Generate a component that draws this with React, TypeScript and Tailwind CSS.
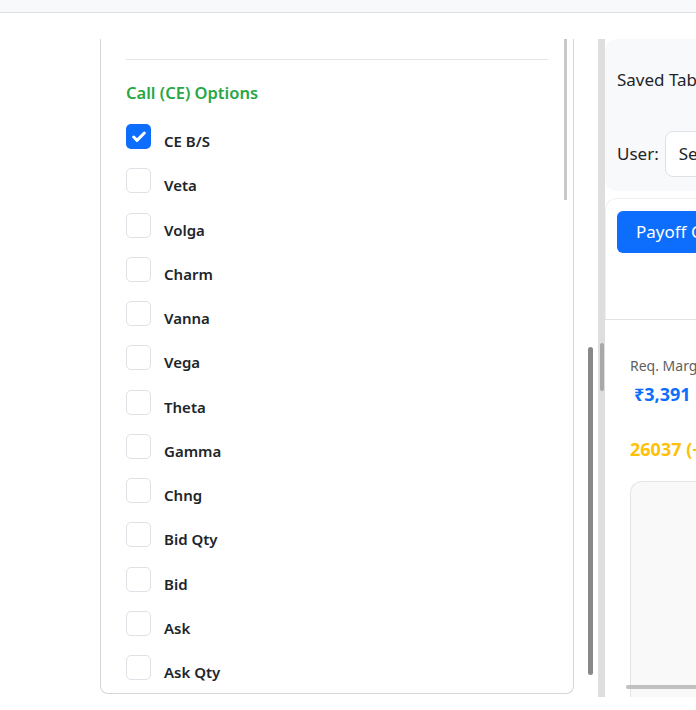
import { Check } from "lucide-react";

const columns = [
  { label: "CE B/S", checked: true },
  { label: "Veta" },
  { label: "Volga" },
  { label: "Charm" },
  { label: "Vanna" },
  { label: "Vega" },
  { label: "Theta" },
  { label: "Gamma" },
  { label: "Chng" },
  { label: "Bid Qty" },
  { label: "Bid" },
  { label: "Ask" },
  { label: "Ask Qty" },
];

function ColumnToggle({ label, checked }: { label: string; checked?: boolean }) {
  return (
    <label className="flex items-start h-[25px]">
      {checked ? (
        <span className="w-[25px] h-[25px] rounded-[5px] bg-[#0d6efd] flex items-center justify-center">
          <Check className="w-[16px] h-[16px] text-white" strokeWidth={4.5} />
        </span>
      ) : (
        <span className="w-[25px] h-[25px] rounded-[5px] border border-[#dee2e6] bg-white" />
      )}
      <span className="ml-[13px] mt-[7px] text-[15px] leading-[20px] font-semibold text-[#212529]">
        {label}
      </span>
    </label>
  );
}

export default function App() {
  return (
    <div
      className="w-[696px] h-[710px] overflow-hidden bg-white flex flex-col"
      style={{ fontFamily: '"Noto Sans", "Open Sans", sans-serif' }}
    >
      {/* Top bar */}
      <div className="h-[13px] bg-[#f8f9fa] border-b border-[#dee2e6] shrink-0" />

      <div className="flex pt-[26px] h-[684px]">
        <div className="w-[100px] shrink-0" />

        {/* Column settings panel (scrolled) */}
        <div className="w-[474px] shrink-0 h-[655px] relative border-x border-b border-[#d6d6d6] rounded-b-lg px-[25px] pt-[20px]">
          <div className="absolute right-[6px] top-0 w-[3px] h-[161px] bg-[#c8c8c8]" />
          <div className="border-t border-[#e5e5e5]" />
          <h6 className="mt-[21px] text-[16.5px] leading-[24px] font-semibold text-[#28a745]">
            Call (CE) Options
          </h6>
          <div className="mt-[19px] flex flex-col gap-[19.25px]">
            {columns.map((c) => (
              <ColumnToggle key={c.label} label={c.label} checked={c.checked} />
            ))}
          </div>
        </div>

        {/* Outer scrollbar */}
        <div className="ml-[14px] w-[5px] shrink-0 flex flex-col">
          <div className="h-[308px]" />
          <div className="h-[328px] rounded-full bg-[#888888]" />
        </div>

        {/* Splitter strip */}
        <div className="ml-[5px] w-[7px] shrink-0 h-[658px] bg-[#dedede] flex flex-col items-center">
          <div className="h-[304px]" />
          <div className="w-[4px] h-[48px] rounded-full bg-[#a8a8a8]" />
        </div>

        {/* Right column */}
        <div className="flex-1 min-w-0 h-[658px] overflow-hidden flex flex-col whitespace-nowrap">
          <div className="w-[360px] bg-[#f8f9fa] rounded-l-xl pl-[12px] pt-[28px] pb-[14px]">
            <div className="text-[17px] leading-[25px] text-[#212529]">Saved Tables</div>
            <div className="mt-[39px] flex items-center">
              <span className="text-[17px] text-[#212529]">User:</span>
              <div className="ml-[6px] h-[46px] w-[200px] bg-white border border-[#dee2e6] rounded-lg flex items-center px-[13px] text-[17px] text-[#212529]">
                Select user
              </div>
            </div>
          </div>

          <div className="mt-[7px] w-[360px] rounded-tl-xl border-t border-l border-[#f0f0f0] pl-[11px] pt-[12px] pb-[66px]">
            <button className="h-[42px] px-[19px] rounded-md bg-[#0d6efd] text-white text-[17px]">
              Payoff Chart
            </button>
          </div>

          <div className="border-t border-[#e2e2e2] w-[360px] pl-[25px] pt-[36px] flex-1 flex flex-col">
            <div className="text-[14px] leading-[20px] text-[#5f5f5f]">Req. Margin</div>
            <div className="ml-[4px] mt-[5px] text-[18px] leading-[26px] font-bold text-[#0d6efd]">
              ₹3,391
            </div>
            <div className="mt-[29px] text-[18px] leading-[26px] font-bold text-[#ffc107]">
              26037 (+0.42%)
            </div>
            <div className="mt-[19px] flex-1 border-t border-l border-[#e3e3ea] rounded-tl-xl bg-[#f9f9f9] flex flex-col justify-end">
              <div className="ml-[-5px] mb-[8px] h-[4px] w-[200px] rounded-full bg-[#c1c1c1]" />
            </div>
          </div>
        </div>
      </div>
    </div>
  );
}
